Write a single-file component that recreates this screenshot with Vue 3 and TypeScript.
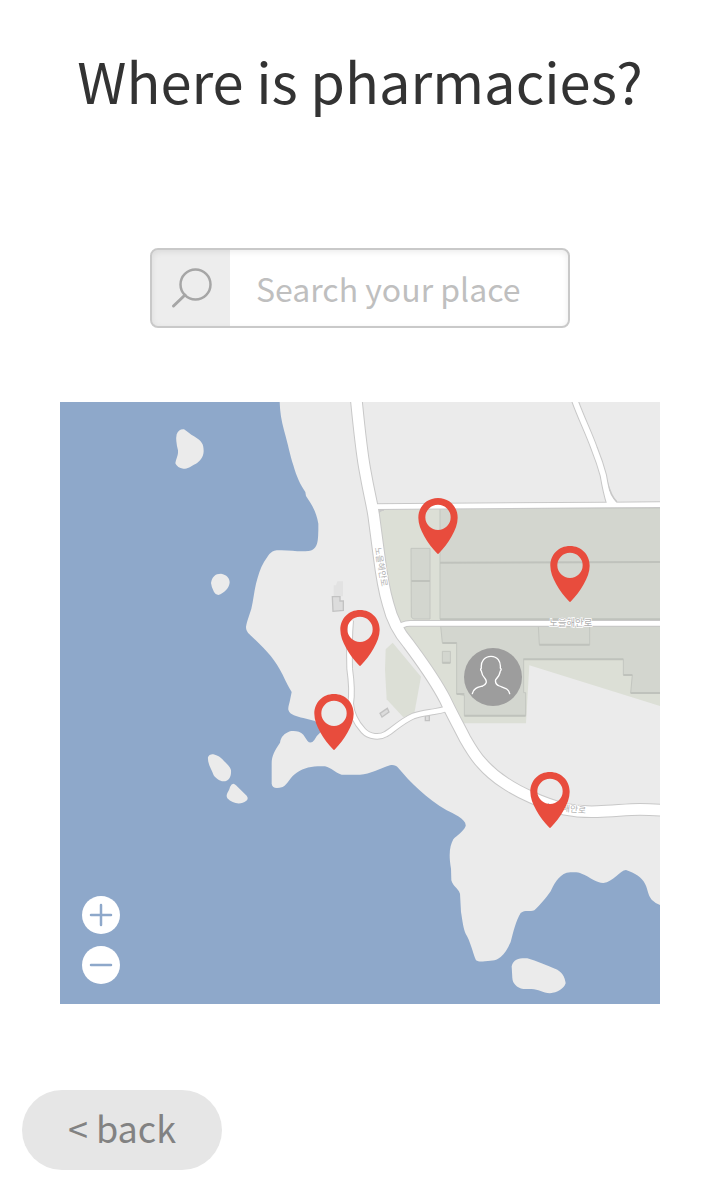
<script setup lang="ts">
import { ref } from 'vue'

interface Pin {
  id: number
  x: number
  y: number
}

const MAP_WIDTH = 600
const MAP_HEIGHT = 602

const query = ref('')
const selected = ref<number | null>(null)

const pins: Pin[] = [
  { id: 1, x: 378, y: 152 },
  { id: 2, x: 510, y: 200 },
  { id: 3, x: 300, y: 264 },
  { id: 4, x: 274, y: 348 },
  { id: 5, x: 490, y: 426 },
]

const place = (pin: Pin) => ({
  left: `${(pin.x / MAP_WIDTH) * 100}%`,
  top: `${(pin.y / MAP_HEIGHT) * 100}%`,
})

const roads = [
  { id: 'upper', width: 20, d: 'M940 314L1640 309L1800 308' },
  { id: 'north', width: 22, d: 'M1544 -6C1562 45 1585 90 1603 140C1615 170 1622 190 1630 220C1635 250 1640 275 1649 304' },
  { id: 'middle', width: 20, d: 'M1008 684Q1026 664 1050 664H1800' },
  { id: 'lane', width: 20, d: 'M872 655C868 700 868 760 869 800C876 850 876 880 872 904C874 940 892 966 910 986C928 1006 960 1007 978 996C1000 984 1020 960 1060 942C1085 933 1105 932 1122 929Q1145 925 1160 920' },
  { id: 'coast', width: 38, d: 'M889 -6C899 95 906 155 914 200C928 280 935 300 941 340L957 460C967 540 975 575 984 605C995 650 1015 690 1045 725C1085 780 1120 825 1155 892C1175 935 1195 970 1215 1010C1235 1045 1250 1068 1265 1083C1290 1112 1312 1128 1335 1143C1360 1160 1390 1175 1415 1186C1450 1202 1480 1212 1515 1222C1550 1229 1580 1230 1612 1229C1660 1228 1700 1222 1740 1222Q1770 1222 1806 1225' },
]
</script>

<template>
  <main class="page">
    <h1 class="title">Where is pharmacies?</h1>

    <form class="search" role="search" @submit.prevent>
      <button class="search-button" type="submit" aria-label="Search">
        <svg viewBox="0 0 42 42" aria-hidden="true">
          <circle cx="25.5" cy="17.5" r="15" />
          <path d="M15 28L3.500 39" />
        </svg>
      </button>
      <input v-model="query" class="search-input" type="text" placeholder="Search your place" aria-label="Search your place" />
    </form>

    <section class="map" aria-label="Map of pharmacies">
      <svg class="map-canvas" viewBox="0 0 1800 1806" aria-hidden="true">
        <rect width="1800" height="1806" fill="#8ea8ca" />
        <g fill="#ebebeb">
          <path d="M659 0C660 30 664 55 672 85C685 130 690 160 700 190C710 225 722 250 736 270L738 282C752 303 768 325 775 365V385C774 410 776 445 745 447C710 450 690 443 650 445C630 447 625 462 612 480C600 500 595 520 588 545C582 570 580 595 574 620C566 645 560 660 558 675C558 690 568 696 580 708C625 750 645 775 668 818C678 840 688 858 695 870L690 895C688 905 684 915 685 923C690 940 710 942 730 948L765 957L790 985L780 992Q770 1000 763 1014Q752 1028 742 1016L730 998C720 986 700 986 690 988C672 995 663 1005 660 1022C645 1045 635 1060 635 1085V1145C637 1160 650 1160 668 1155C685 1145 690 1125 710 1112C735 1095 760 1092 795 1093C815 1098 825 1112 845 1118H900C930 1117 960 1100 990 1090C1000 1088 1008 1090 1015 1098C1050 1140 1100 1190 1160 1225C1180 1235 1220 1252 1217 1272C1210 1290 1190 1300 1180 1312C1170 1330 1165 1355 1173 1400L1174 1435C1180 1455 1192 1455 1200 1475L1203 1530C1208 1560 1210 1580 1217 1595C1230 1615 1238 1650 1248 1675C1255 1680 1265 1679 1275 1678C1300 1676 1310 1675 1322 1665C1335 1655 1345 1635 1352 1620C1360 1590 1368 1555 1382 1533C1395 1523 1410 1530 1423 1525C1440 1510 1460 1485 1472 1468C1480 1450 1495 1420 1520 1412C1540 1410 1555 1410 1565 1415C1590 1425 1610 1443 1630 1443C1660 1440 1680 1405 1698 1404C1725 1413 1745 1425 1755 1445C1765 1465 1762 1475 1775 1493Q1785 1503 1800 1509V0Z" />
          <path d="M350 97Q357 80 372 82C385 90 390 97 402 103C425 117 431 125 431 148C430 166 420 178 408 185C390 194 384 200 370 200Q352 198 346 184C350 165 355 160 354 145Q346 115 350 97Z" />
          <path d="M453 543C456 525 465 515 483 515C500 517 510 530 509 542C506 560 493 572 475 579Q466 578 462 570Q454 555 453 543Z" />
          <path d="M444 1065Q448 1055 460 1057C480 1062 485 1070 495 1080Q512 1096 513 1105C514 1120 510 1138 490 1138C480 1138 468 1130 461 1120C455 1102 442 1085 444 1065Z" />
          <path d="M510 1155Q518 1138 528 1150L560 1181Q567 1190 558 1197C545 1208 518 1207 502 1189C496 1175 506 1172 510 1155Z" />
          <path d="M1355 1693C1360 1670 1380 1668 1402 1669C1430 1677 1460 1690 1485 1700C1505 1707 1515 1725 1517 1744C1512 1760 1492 1772 1470 1774C1448 1772 1435 1762 1415 1761H1390C1370 1757 1358 1745 1357 1728Z" />
        </g>

        <g fill="#dcdfd6">
          <path d="M958 322L1800 318V912L1408 790L1398 964H1200L1150 885L1045 725L984 605L938 340Z" />
          <path d="M977 742L998 722L1083 824L1063 934L1030 946L980 892L975 804Z" />
        </g>

        <g class="building">
          <path d="M1140 318H1810V652H1140Z" />
          <path d="M1053 439H1110V651H1060L1054 645Z" />
          <path d="M1142 672L1147 722H1190V876L1213 880V941H1397V872H1391V772H1690V819H1717L1712 873H1810V672Z" />
          <path d="M1435 672L1438 728H1589V672Z" />
          <path d="M1147 748H1171V783H1147Z" />
        </g>
        <g class="building-edge">
          <path d="M1140 482L1800 480M1140 652H1800M1054 537H1110" />
          <path d="M1147 723H1190M1190 876H1213M1213 941H1397M1390 772H1690M1690 819H1717M1712 873H1800M1438 728H1589M1147 782H1171" />
        </g>
        <g class="house">
          <path class="pale" d="M821 550H828L832 538H849V583H821Z" />
          <path d="M817 584H840V597H850V625L819 628Z" />
          <path d="M960 934L982 919L987 930L966 945Z" />
          <path d="M1096 941H1108V956H1096Z" />
        </g>

        <g class="road-edge">
          <path v-for="road in roads" :key="road.id" :d="road.d" :stroke-width="road.width" />
          <path d="M1641 240Q1652 282 1670 300" stroke-width="6" />
          <path d="M950 340Q958 323 972 323" stroke-width="6" />
        </g>
        <g class="road-fill">
          <path v-for="road in roads" :key="road.id" :d="road.d" :stroke-width="road.width - 6" />
          <path class="corner" d="M1639 240Q1650 284 1670 303H1644Z" />
        </g>

        <g class="road-name">
          <text transform="translate(944 437) rotate(80)">노을해안로</text>
          <text class="wide" x="1468" y="672">노을해안로</text>
          <text transform="translate(1458 1222) rotate(6)">노을해안로</text>
        </g>

        <g class="me">
          <circle cx="1299" cy="825" r="87" />
          <path d="M1237 875C1240 858 1255 856 1268 852C1280 847 1281 838 1276 831C1268 823 1265 815 1264 807Q1260 803 1264 798C1262 778 1274 763 1293 763C1312 763 1323 778 1321 798Q1326 803 1321 807C1320 815 1315 825 1307 833C1305 842 1308 848 1318 852C1331 857 1346 859 1349 875" />
        </g>
      </svg>

      <button
        v-for="pin in pins"
        :key="pin.id"
        class="pin"
        type="button"
        :style="place(pin)"
        :aria-label="`Pharmacy ${pin.id}`"
        :aria-pressed="selected === pin.id"
        @click="selected = pin.id"
      >
        <svg viewBox="0 0 120 168" aria-hidden="true">
          <path fill-rule="evenodd" d="M60 0C94 0 119 26 119 59C119 94 90 137 63 166Q60 170 57 166C30 137 1 94 1 59C1 26 26 0 60 0ZM60 20A38 38 0 1 0 60 96A38 38 0 1 0 60 20Z" />
        </svg>
      </button>

      <div class="zoom">
        <button type="button" aria-label="Zoom in">
          <svg viewBox="0 0 38 38" aria-hidden="true"><path d="M9 19H29M19 9V29" /></svg>
        </button>
        <button type="button" aria-label="Zoom out">
          <svg viewBox="0 0 38 38" aria-hidden="true"><path d="M9 19H29" /></svg>
        </button>
      </div>
    </section>

    <button class="back" type="button">&lt; back</button>
  </main>
</template>

<style>
body {
  background: #fff;
}
</style>

<style scoped>
.page,
.page button,
.page input {
  font-family: "Noto Sans CJK KR", "Noto Sans", sans-serif;
}

.page {
  display: flex;
  flex-direction: column;
  box-sizing: border-box;
  padding: 36px 60px 30px;
}

.page button {
  margin: 0;
  padding: 0;
  border: 0;
  cursor: pointer;
}

.title {
  margin: 0;
  color: #333;
  font-size: 56px;
  font-weight: 400;
  line-height: 88px;
  text-align: center;
  white-space: nowrap;
}

.search {
  display: flex;
  align-self: center;
  box-sizing: border-box;
  width: 70%;
  height: 80px;
  margin-top: 124px;
  overflow: hidden;
  border: 2px solid #c9c9c9;
  border-radius: 8px;
  box-shadow: inset 0 2px 6px #00000014;
}

.page .search-button {
  display: flex;
  flex: none;
  align-items: center;
  justify-content: center;
  width: 78px;
  background: #00000012;
}

.search-button svg {
  width: 42px;
  height: 42px;
  fill: none;
  stroke: #a6a6a6;
  stroke-width: 2.500;
  stroke-linecap: round;
}

.search-button path {
  stroke-width: 3;
}

.search-input {
  flex: 1;
  min-width: 0;
  padding: 0 26px;
  border: 0;
  outline: 0;
  background: transparent;
  color: #333;
  font-size: 32px;
  line-height: 40px;
}

.search-input::placeholder {
  color: #bfbfbf;
  line-height: 40px;
  opacity: 1;
}

.map {
  position: relative;
  margin-top: 74px;
}

.map-canvas {
  display: block;
  width: 100%;
}

.building {
  fill: #d3d6cf;
  stroke: #c3c6c0;
  stroke-width: 3;
}

.building-edge {
  fill: none;
  stroke: #bfc2bc;
  stroke-width: 6;
}

.house {
  fill: #dcdcdc;
  stroke: #c2c2c2;
  stroke-width: 4;
}

.house .pale {
  fill: #e2e2e2;
  stroke: none;
}

.road-edge {
  fill: none;
  stroke: #c8c8c8;
}

.road-fill {
  fill: none;
  stroke: #fff;
}

.road-fill .corner {
  fill: #fff;
  stroke: none;
}

.road-name {
  fill: #b0b0b0;
  stroke: #fff;
  stroke-width: 4;
  paint-order: stroke;
  font-family: "Noto Sans CJK KR", sans-serif;
  font-size: 26px;
}

.road-name .wide {
  font-size: 28px;
}

.me circle {
  fill: #9d9d9d;
}

.me path {
  fill: none;
  stroke: #fff;
  stroke-width: 4;
  stroke-linecap: round;
}

.page .pin {
  position: absolute;
  width: 40px;
  height: 56px;
  background: none;
  transform: translate(-50%, -100%);
}

.pin svg {
  display: block;
  fill: #e84c3d;
}

.zoom {
  position: absolute;
  bottom: 20px;
  left: 22px;
  display: flex;
  flex-direction: column;
  gap: 12px;
}

.zoom button {
  width: 38px;
  height: 38px;
  border-radius: 50%;
  background: #fff;
}

.zoom svg {
  display: block;
  fill: none;
  stroke: #8ea8ca;
  stroke-width: 2.500;
  stroke-linecap: round;
}

.page .back {
  align-self: flex-start;
  width: 200px;
  height: 80px;
  margin: 86px 0 0 -38px;
  padding-bottom: 6px;
  border-radius: 40px;
  background: #e6e6e6;
  color: #828282;
  font-size: 36px;
}
</style>
